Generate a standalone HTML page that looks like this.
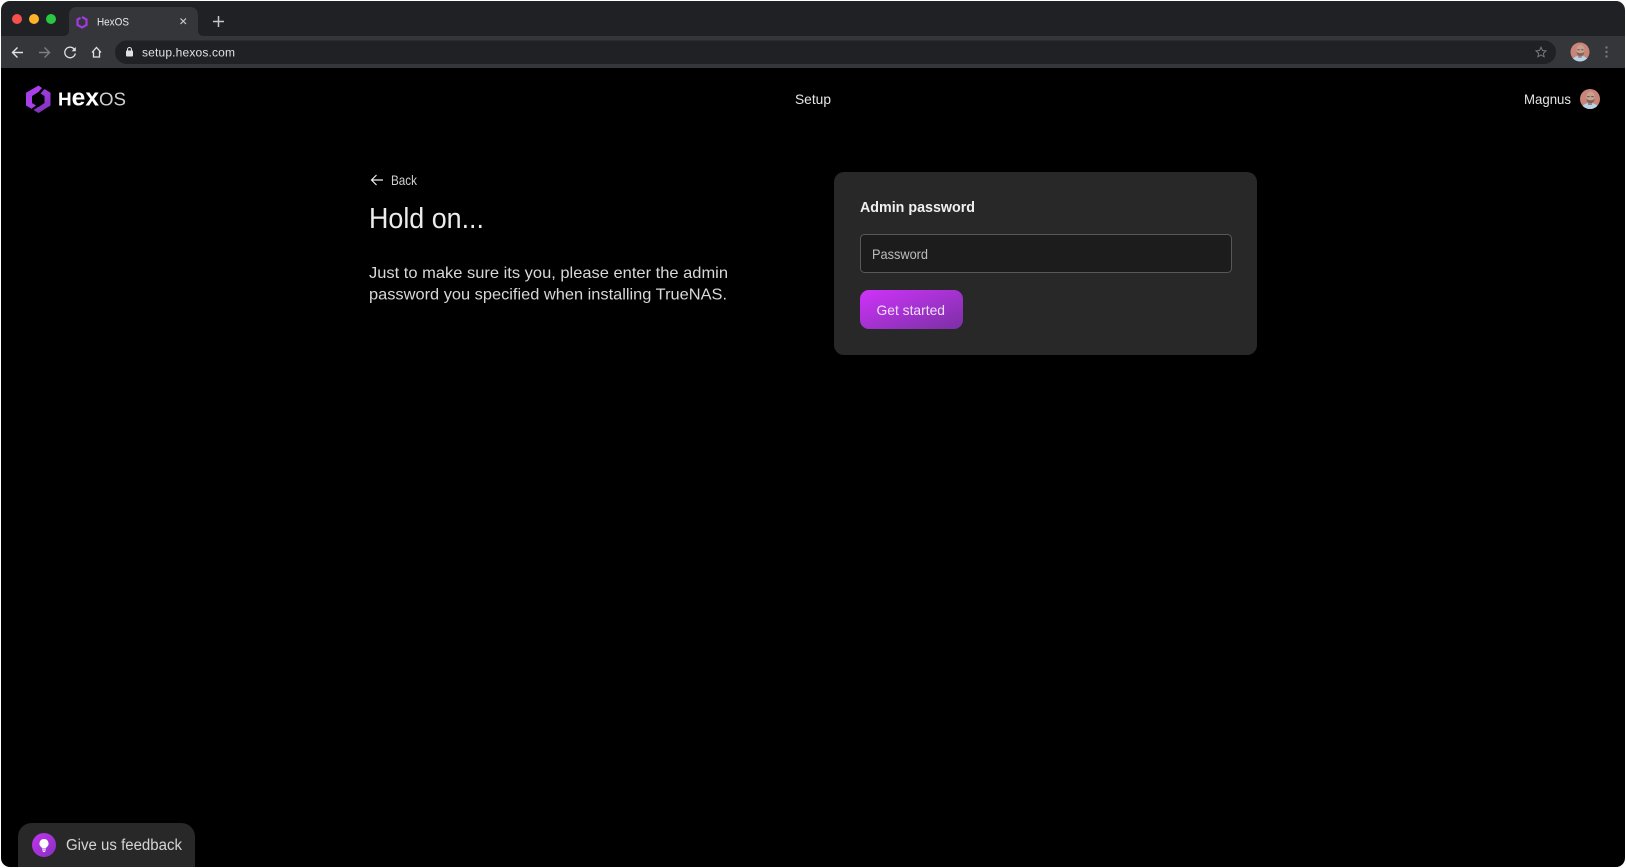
<!DOCTYPE html>
<html lang="en">
<head>
<meta charset="utf-8">
<title>HexOS</title>
<style>
html,body{margin:0;padding:0;width:1626px;height:868px;overflow:hidden;background:#fff}
svg{display:block}
text{font-family:"Liberation Sans",sans-serif}
</style>
</head>
<body>
<svg width="1626" height="868" viewBox="0 0 1626 868" xmlns="http://www.w3.org/2000/svg">
<defs>
<linearGradient id="btn" x1="0" y1="0" x2="1" y2="1"><stop offset="0" stop-color="#cf33fb"/><stop offset="1" stop-color="#7a30a4"/></linearGradient>
<linearGradient id="fb" x1="0" y1="0" x2="1" y2="1"><stop offset="0" stop-color="#c035f0"/><stop offset="1" stop-color="#8a2fc0"/></linearGradient>
<linearGradient id="hexb" x1="0" y1="0" x2="0" y2="1"><stop offset="0" stop-color="#a03ce0"/><stop offset="1" stop-color="#7f33b8"/></linearGradient>
<clipPath id="win"><rect x="1" y="1" width="1624" height="866" rx="9"/></clipPath>
<clipPath id="av"><circle cx="0" cy="0" r="10"/></clipPath>
<g id="avatar" clip-path="url(#av)">
  <rect x="-10" y="-10" width="20" height="20" fill="#c98579"/>
  <ellipse cx="0" cy="9.500" rx="8.500" ry="5.500" fill="#b7d3ea"/>
  <rect x="-2" y="2" width="4" height="4" fill="#a98072"/>
  <ellipse cx="0.500" cy="-2" rx="4.200" ry="5.500" fill="#c8a090"/>
  <path d="M-3.700-.5c.5 3.500 1.800 4.500 4.200 4.500s3.700-1 4.200-4.500c-1 1.500-2.500 1.800-4.200 1.800s-3.200-.3-4.200-1.800z" fill="#7a6257"/>
  <rect x="-2.800" y="-2.800" width="2.500" height=".9" fill="#57473f"/>
  <rect x="1.200" y="-2.800" width="2.500" height=".9" fill="#57473f"/>
</g>
</defs>

<rect width="1626" height="868" fill="#fff"/>
<g clip-path="url(#win)">
  <rect x="0" y="0" width="1626" height="36" fill="#202124"/>
  <rect x="0" y="36" width="1626" height="32" fill="#35363a"/>
  <rect x="0" y="68" width="1626" height="800" fill="#000"/>

  <!-- traffic lights -->
  <circle cx="17" cy="19" r="5" fill="#f5504e"/>
  <circle cx="34" cy="19" r="5" fill="#fdb32a"/>
  <circle cx="51" cy="19" r="5" fill="#2ac840"/>

  <!-- tab -->
  <path d="M63 36c4 0 6-2 6-6V15c0-5 3-8 8-8h113c5 0 8 3 8 8v15c0 4 2 6 6 6z" fill="#35363a"/>
  <g fill="none" stroke="#a23ae0" stroke-width="2.200">
    <path d="M82 17 L86.500 19.500 V25 L82 27.500 L77.500 25 V19.500 L80.500 17.800"/>
  </g>
  <text x="97" y="25.500" font-size="11" fill="#e8eaed" textLength="32" lengthAdjust="spacingAndGlyphs">HexOS</text>
  <path d="M180.500 18.500l5.500 5.500M186 18.500l-5.500 5.500" stroke="#c9cbce" stroke-width="1.200" fill="none"/>
  <path d="M218.500 16v11M213 21.500h11" stroke="#c4c7c5" stroke-width="1.500" fill="none"/>

  <!-- toolbar icons -->
  <path d="M23 52.500H13M17.500 47.500l-5 5 5 5" stroke="#dfe1e5" stroke-width="1.400" fill="none"/>
  <path d="M39 52.500h10M44.500 47.500l5 5-5 5" stroke="#7c7e82" stroke-width="1.400" fill="none"/>
  <path d="M74.500 49.500a5.300 5.300 0 1 0 .8 4" stroke="#dfe1e5" stroke-width="1.300" fill="none"/>
  <path d="M75.800 47v4.300h-4.300z" fill="#dfe1e5"/>
  <path d="M92 52.500l4.500-5 4.500 5M93.500 51.500v5.500h6v-5.500" stroke="#dfe1e5" stroke-width="1.300" fill="none"/>

  <!-- omnibox -->
  <rect x="115" y="40.500" width="1441" height="23.500" rx="11.750" fill="#202124"/>
  <rect x="126" y="50.500" width="7" height="6" rx="1" fill="#dfe1e5"/>
  <path d="M127.500 51v-1.500a2 2 0 0 1 4 0V51" stroke="#dfe1e5" stroke-width="1.100" fill="none"/>
  <text x="142" y="56.500" font-size="12" fill="#dfe1e5" textLength="93" lengthAdjust="spacing">setup.hexos.com</text>
  <path d="M1541 47.200l1.500 3.300 3.500.4-2.600 2.400.7 3.500-3.100-1.800-3.100 1.800.7-3.500-2.600-2.400 3.500-.4z" stroke="#76787b" stroke-width="1" fill="none"/>
  <use href="#avatar" transform="translate(1580 52) scale(.95)"/>
  <circle cx="1606.500" cy="47.500" r="1.200" fill="#76787b"/>
  <circle cx="1606.500" cy="52" r="1.200" fill="#76787b"/>
  <circle cx="1606.500" cy="56.500" r="1.200" fill="#76787b"/>

  <!-- header -->
  <path d="M38.500 85.500 26 92.800V105.500l5.500 3.200 4.500-3.200-4-2.500V96l6.500-4 3.500-4z" fill="#a83fea"/>
  <path d="M44.500 89l6 3.800V105.500L38.500 113l-5-3 4.500-3 .5 0 6-4V96l-4-2.500z" fill="url(#hexb)"/>
  <text x="58" y="105.500" font-weight="700" fill="#fff" textLength="41" lengthAdjust="spacingAndGlyphs"><tspan font-size="18.500">H</tspan><tspan font-size="24">ex</tspan></text>
  <text x="99" y="105.500" font-size="18.500" fill="#cfcfcf" textLength="27" lengthAdjust="spacingAndGlyphs">OS</text>
  <text x="795" y="104" font-size="14" fill="#e6e6e6" textLength="36" lengthAdjust="spacingAndGlyphs">Setup</text>
  <text x="1524" y="104" font-size="14" fill="#e6e6e6" textLength="47" lengthAdjust="spacingAndGlyphs">Magnus</text>
  <use href="#avatar" transform="translate(1590 99)"/>

  <!-- left column -->
  <path d="M383 180H371.500M376.500 175l-5 5 5 5" stroke="#f0f0f0" stroke-width="1.200" fill="none"/>
  <text x="391" y="185" font-size="14" fill="#cfcfcf" textLength="26" lengthAdjust="spacingAndGlyphs">Back</text>
  <text x="369" y="228" font-size="29" fill="#ececec" textLength="115" lengthAdjust="spacingAndGlyphs">Hold on...</text>
  <text x="369" y="278" font-size="16" fill="#d8d8d8" textLength="359" lengthAdjust="spacingAndGlyphs">Just to make sure its you, please enter the admin</text>
  <text x="369" y="299.500" font-size="16" fill="#d8d8d8" textLength="358" lengthAdjust="spacingAndGlyphs">password you specified when installing TrueNAS.</text>

  <!-- card -->
  <rect x="834" y="172" width="423" height="183" rx="10" fill="#282828"/>
  <text x="860" y="212" font-size="15" font-weight="700" fill="#f0f0f0" textLength="115" lengthAdjust="spacingAndGlyphs">Admin password</text>
  <rect x="860.500" y="234.500" width="371" height="38" rx="4" fill="#1c1c1c" stroke="#585858"/>
  <text x="872" y="259" font-size="14" fill="#bdbdbd" textLength="56" lengthAdjust="spacingAndGlyphs">Password</text>
  <rect x="860" y="290" width="103" height="39" rx="9" fill="url(#btn)"/>
  <text x="876.500" y="315" font-size="14" fill="#f0dff8" textLength="68.500" lengthAdjust="spacingAndGlyphs">Get started</text>

  <!-- feedback -->
  <path d="M18 868V837c0-8 6-14 14-14h149c8 0 14 6 14 14v31z" fill="#282828"/>
  <circle cx="44" cy="845" r="12" fill="url(#fb)"/>
  <path d="M44 839a4.500 4.500 0 0 0-2.600 8.200c.5.400.7.900.7 1.300h3.800c0-.4.200-.9.700-1.300A4.500 4.500 0 0 0 44 839z" fill="#fff"/>
  <rect x="42.200" y="849.300" width="3.600" height="1.200" fill="#fff"/>
  <rect x="42.800" y="851" width="2.400" height="1" fill="#fff"/>
  <text x="66" y="850" font-size="15.500" fill="#d4d4d4" textLength="116" lengthAdjust="spacingAndGlyphs">Give us feedback</text>
</g>
</svg>
</body>
</html>
